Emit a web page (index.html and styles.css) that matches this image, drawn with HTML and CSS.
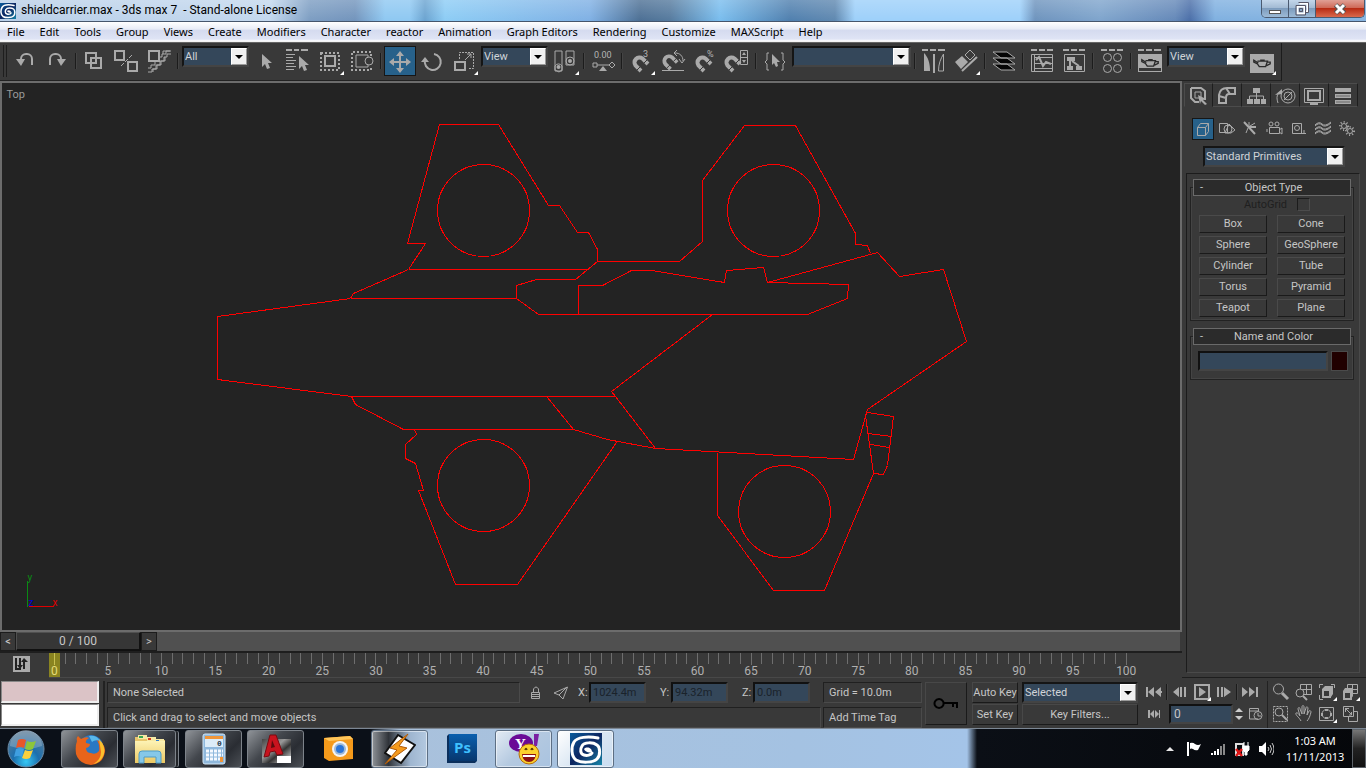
FILE: index.html
```
<!DOCTYPE html>
<html lang="en">
<head>
    <meta charset="UTF-8" />
    <meta name="viewport" content="width=device-width, initial-scale=1.0" />
    <title>shieldcarrier.max - 3ds max 7 - Stand-alone License</title>
    <link rel="stylesheet" href="styles.css">
</head>
<body>
    <svg class="defs" width="0" height="0" aria-hidden="true">
        <defs>
            <linearGradient id="max-bg" x1="0" y1="0" x2="1" y2="1"><stop offset="0" stop-color="#0a5c9c"/><stop offset=".5" stop-color="#0d2560"/><stop offset="1" stop-color="#1685a8"/></linearGradient>
            <radialGradient id="orb" cx=".5" cy=".85" r=".8"><stop offset="0" stop-color="#36c8f5"/><stop offset=".45" stop-color="#1b6fae"/><stop offset="1" stop-color="#5a7c98"/></radialGradient>
            <linearGradient id="folder" x1="0" y1="0" x2="0" y2="1"><stop offset="0" stop-color="#fdf3b5"/><stop offset="1" stop-color="#ecc862"/></linearGradient>
            <linearGradient id="ps" x1="0" y1="0" x2="0" y2="1"><stop offset="0" stop-color="#0a5fae"/><stop offset="1" stop-color="#07376e"/></linearGradient>
            <linearGradient id="smoke" x1="0" y1="0" x2="1" y2="1"><stop offset="0" stop-color="#444"/><stop offset=".4" stop-color="#999"/><stop offset=".6" stop-color="#333"/><stop offset="1" stop-color="#eee"/></linearGradient>
            <symbol id="max-logo" viewBox="0 0 32 32">
                <rect width="32" height="32" fill="url(#max-bg)"/>
                <path d="M28 5C18 3 7 4 4 9c-3 5-3 14 2 18 5 3 17 3 21-1 4-4 3-12 0-14-4-3-13-3-15 1-2 3-2 8 2 9 3 1 7 0 8-2" fill="none" stroke="#fff" stroke-width="3" stroke-linecap="round"/>
                <path d="M14 16c3-3 8-1 8 3-3 1-7 0-8-3z" fill="#fff"/>
            </symbol>
            <symbol id="magnet" viewBox="0 0 20 20">
                <path d="M10 17 4.500 11.500A5 5 0 0 1 11.500 4.500L17 10" fill="none" stroke="#aaa" stroke-width="4"/>
                <path d="m6 16 4-4M13 9l4-4" stroke="#393939" stroke-width="1"/>
            </symbol>
            <symbol id="teapot" viewBox="0 0 22 12">
                <path d="M6 4h11l-2 6H8L6 7 2 5V3l5 3M9 3h5M17 5h3v2l-4 2" fill="#aaa" stroke="#2a2a2a" stroke-width="1.500"/>
            </symbol>
        </defs>
    </svg>

    <header class="titlebar">
        <svg class="app-icon" viewBox="0 0 32 32"><use href="#max-logo"/></svg>
        <h1 class="title">shieldcarrier.max - 3ds max 7 &nbsp;- Stand-alone License</h1>
        <div class="window-buttons">
            <button class="win" aria-label="Minimize"><svg width="14" height="14"><rect x="1.500" y="8.500" width="11" height="3" fill="#fff" stroke="#555"/></svg></button>
            <button class="win" aria-label="Restore"><svg width="14" height="14" fill="none"><path d="M4.500 1.500h8v8h-3" stroke="#fff" stroke-width="2"/><rect x="2.500" y="4.500" width="7" height="7" stroke="#fff" stroke-width="2"/><path d="M3.500 .5h10v10h-3M1 3.500h9.500v9.500H1z M4.500 6.500h3v3h-3z" stroke="#556"/></svg></button>
            <button class="win win-close" aria-label="Close"><svg width="14" height="14"><path d="m2.500 3 9 8m0-8-9 8" stroke="#555" stroke-width="5"/><path d="m3 3 8 8m0-8-8 8" stroke="#fff" stroke-width="3"/></svg></button>
        </div>
    </header>

    <nav class="menubar">
        <button>File</button>
        <button>Edit</button>
        <button>Tools</button>
        <button>Group</button>
        <button>Views</button>
        <button>Create</button>
        <button>Modifiers</button>
        <button>Character</button>
        <button>reactor</button>
        <button>Animation</button>
        <button>Graph Editors</button>
        <button>Rendering</button>
        <button>Customize</button>
        <button>MAXScript</button>
        <button>Help</button>
    </nav>

    <!-- main toolbar -->
    <div class="toolbar-row">
    <div class="toolbar">
        <span class="grip"></span>
        <button class="tool" aria-label="Undo"><svg viewBox="0 0 32 32"><path d="M12 16v-2a5 5 0 0 1 5-5h1a5 5 0 0 1 5 5v6" class="l2"/><path d="M7 14h9l-4 7z" class="f"/></svg></button>
        <button class="tool" aria-label="Redo"><svg viewBox="0 0 32 32"><path d="M20 16v-2a5 5 0 0 0-5-5h-1a5 5 0 0 0-5 5v6" class="l2"/><path d="M25 14h-9l4 7z" class="f"/></svg></button>
        <span class="sep"></span>
        <button class="tool" aria-label="Select and Link"><svg viewBox="0 0 32 32"><path d="M7 8h10v10H7zM12 13h10v10H12z" class="l2"/></svg></button>
        <button class="tool" aria-label="Unlink Selection"><svg viewBox="0 0 32 32"><path d="M4 6h9v9H4zM17 17h9v9h-9z" class="l2"/><path d="m10 21 3-3m1-1 3-3m1-1 3-3" class="l"/></svg></button>
        <button class="tool" aria-label="Bind to Space Warp"><svg viewBox="0 0 32 32"><path d="M6 6h10v10H6z" class="l2"/><path d="M27 6h-4v3h-4v3h-3v4h-4v4H8v3H5M28 9h-4v3h-3v4h-4v4h-4v4H9v3H5M28 6h-4M20 9v-3h4M10 27v-3h4v-4h4v-4h4v-4" class="l"/></svg></button>
        <span class="sep"></span>
        <span class="combo combo-s"><select aria-label="Selection Filter"><option>All</option></select></span>
        <button class="tool" aria-label="Select Object"><svg viewBox="0 0 32 32"><path d="M12 9v13l3-3 2 5 3-1-2-5h4z" class="f"/></svg></button>
        <button class="tool" aria-label="Select by Name"><svg viewBox="0 0 32 32"><path d="M4 5h6m2 0h5m2 0h7" class="l2"/><path d="M4 9.500h9M4 12.500h7M4 15.500h10M4 18.500h8M4 21.500h10M4 24.500h8" class="l"/><path d="M17 11v13l3-3 2 5 3-1-2-5h4z" class="f"/></svg></button>
        <button class="tool" aria-label="Rectangular Selection Region"><svg viewBox="0 0 32 32"><path d="M7 8h18v17H7z" class="l2 dots"/><path d="M11 11h10v10H11z" class="l2"/><path d="M30 26v4h-4z" fill="#fff"/></svg></button>
        <button class="tool" aria-label="Window/Crossing"><svg viewBox="0 0 32 32"><path d="M25 11V7H6v18h19v-4" class="l2 dots"/><path d="M22 12v-2H10v12h12v-2" class="l"/><circle cx="23" cy="16" r="4" class="l"/></svg></button>
        <span class="sep"></span>
        <button class="tool tool-on" aria-label="Select and Move"><svg viewBox="0 0 32 32"><path d="M16 8v18M7 17h18" class="l2"/><path d="m12 11 4-5 4 5zM12 23l4 5 4-5zM10 13l-5 4 5 4zM22 13l5 4-5 4z" class="f"/></svg></button>
        <button class="tool" aria-label="Select and Rotate"><svg viewBox="0 0 32 32"><path d="M18 9a8 8 0 1 1-9 6" class="l2"/><path d="m5 17 4-5 4 5z" class="f"/></svg></button>
        <button class="tool" aria-label="Select and Scale"><svg viewBox="0 0 32 32"><path d="M7 17h10v8H7z" class="l2"/><path d="M11.500 14V7.500h14v16H20" class="l dash"/><path d="m17 15 6-6m-4 0h4v4" class="l"/><path d="M30 26v4h-4z" fill="#fff"/></svg></button>
        <span class="combo combo-s"><select aria-label="Reference Coordinate System"><option>View</option></select></span>
        <button class="tool" aria-label="Use Pivot Point Center"><svg viewBox="0 0 32 32"><path d="M6 6h7v20H6zM17 6h8v14h-8z" class="l"/><path d="M6 21a4 4 0 0 1 7 0v4l-3 2-4-2z" class="l"/><circle cx="9.500" cy="22" r="2" class="f"/><circle cx="21" cy="16" r="2" class="f"/><circle cx="21" cy="16" r="4" class="l"/><path d="M30 26v4h-4z" fill="#fff"/></svg></button>
        <span class="sep"></span>
        <button class="tool" aria-label="Select and Manipulate"><svg viewBox="0 0 32 32"><text x="7" y="13" class="icon-text">0.00</text><path d="M6 18h4v4H6zM10 20h12M22 20l3-3 3 3-3 3z" class="l"/><path d="M12 26l4-5 4 5z" class="f"/></svg></button>
        <span class="sep"></span>
        <button class="tool" aria-label="Snaps Toggle"><svg viewBox="0 0 32 32"><use href="#magnet" x="6" y="9" width="20" height="20"/><text x="18" y="12" class="icon-text">3</text><path d="M30 26v4h-4z" fill="#fff"/></svg></button>
        <button class="tool" aria-label="Angle Snap Toggle"><svg viewBox="0 0 32 32"><use href="#magnet" x="4" y="8" width="19" height="19"/><path d="M5 25.500h22M18 8c5 0 8 3 8 8M20 5l-3 3 3 3M22 14l3 4 3-4" class="l"/></svg></button>
        <button class="tool" aria-label="Percent Snap Toggle"><svg viewBox="0 0 32 32"><use href="#magnet" x="5" y="9" width="20" height="20"/><text x="18" y="12" class="icon-text">%</text></svg></button>
        <button class="tool" aria-label="Spinner Snap Toggle"><svg viewBox="0 0 32 32"><use href="#magnet" x="2" y="9" width="20" height="20"/><path d="M19.500 5.500h7v14h-7zM19 12.500h7" class="l"/><path d="m21 10 2-3 2 3zM21 15l2 3 2-3z" class="f"/></svg></button>
        <span class="sep"></span>
        <button class="tool" aria-label="Named Selection Sets"><svg viewBox="0 0 32 32"><path d="M10 8H8v7l-2 2 2 2v6h2M22 8h2v7l2 2-2 2v6h-2" class="l"/><path d="M13 9v11l2-2 2 4 2-1-1-4h3z" class="f"/></svg></button>
        <span class="combo combo-m"><select aria-label="Named Selection"><option></option></select></span>
        <span class="sep"></span>
        <button class="tool" aria-label="Mirror"><svg viewBox="0 0 32 32"><path d="M4 5h6m2 0h6m2 0h7" class="l2"/><path d="M6 8v18h6c0-8-2-14-6-18z" class="f"/><path d="M16 9v19" class="l2"/><path d="M25.500 9v17h-5c0-7 2-12 5-17z" class="l"/></svg></button>
        <button class="tool" aria-label="Align"><svg viewBox="0 0 32 32"><path d="m5 17 7-6 6 6-7 7z" class="f"/><path d="m15 10 5-5 5 5-5 5zM12 26 26 12" class="l"/><path d="m12 26 15-14" class="l2"/><path d="M30 26v4h-4z" fill="#fff"/></svg></button>
        <span class="sep"></span>
        <button class="tool" aria-label="Layer Manager"><svg viewBox="0 0 32 32"><path d="M5 19h14l8 6H13zM5 13h14l8 6H13zM5 7h14l8 6H13z" fill="#050505" stroke="#aaa"/></svg></button>
        <span class="sep"></span>
        <button class="tool" aria-label="Curve Editor"><svg viewBox="0 0 32 32"><path d="M5 5h6m2 0h6m2 0h6" class="l2"/><path d="M5.500 9.500h21v17h-21zM8.500 9v17M8 12.500h19M8 18.500h19M8 23.500h19" class="l"/><path d="m10 15 3-3 4 9 3-4 5 2" class="l2"/></svg></button>
        <button class="tool" aria-label="Schematic View"><svg viewBox="0 0 32 32"><path d="M5 5h6m2 0h6m2 0h6" class="l2"/><path d="M6.500 9.500h20v17h-20z" class="l"/><path d="M9 12h8v4H9zM9 21h6v4H9zM18 21h6v4h-6z" class="f"/><path d="M12 16v5M14 16l7 5" class="l2"/></svg></button>
        <span class="sep"></span>
        <button class="tool" aria-label="Material Editor"><svg viewBox="0 0 32 32"><path d="M5 5h6m2 0h6m2 0h6" class="l2"/><g class="l"><circle cx="11.500" cy="12.500" r="4"/><circle cx="21.500" cy="12.500" r="4"/><circle cx="11.500" cy="23.500" r="4"/><circle cx="21.500" cy="23.500" r="4"/></g></svg></button>
        <span class="sep"></span>
        <button class="tool" aria-label="Render Scene"><svg viewBox="0 0 32 32"><path d="M4 5h6m2 0h6m2 0h7" class="l2"/><path d="M4 9h24v18H4z" class="f"/><path d="M5 23h22v3H5z" fill="#393939"/><use href="#teapot" x="6" y="12" width="20" height="11"/></svg></button>
        <span class="combo combo-v"><select aria-label="Render Type"><option>View</option></select></span>
        <button class="tool" aria-label="Quick Render"><svg viewBox="0 0 32 32"><path d="M4 9h24v19H4z" class="f"/><use href="#teapot" x="6" y="12" width="20" height="12"/><path d="M30 26v4h-4z" fill="#fff"/></svg></button>
    </div>
    </div>

    <main class="workspace">
        <section class="stage">
            <div class="viewport">
                <svg class="drawing" viewBox="1.500 82.500 1178 547" preserveAspectRatio="xMinYMin meet">
                    <text x="6" y="97" class="view-name">Top</text>
                    <g class="wire">
                        <!-- hull -->
                        <path d="M350 298 217 316V379L351 396H615L611 391 712 314M615 396 655 448"/>
                        <path d="M767 282 877 252 899 276 943 269 966 341 867 409 853 459 655 448 607 439 573 429 547 397"/>
                        <path d="M351 396 355 404 403 429H573"/>
                        <path d="M350 298H516M408 269H588"/>
                        <!-- cockpit -->
                        <path d="M597 261 575 279H536L516 285V298L538 314H807L847 298 848 284 767 282 763 267 726 270 724 282 651 270H631L602 285H578V314"/>
                        <!-- nacelles -->
                        <path d="M597 261V249L588 232H577L559 205H548L498 124H439L407 243H425L408 269 353 293 350 298"/>
                        <path d="M597 261H679L702 241V180L744 125H795L855 233V244L867 245 870 253"/>
                        <path d="M414 429 416 434 405 444V458L415 463 423 490H418L455 584H517L616 442"/>
                        <path d="M717 452V515L773 590H824L873 473"/>
                        <path d="M867 409 865 415 873 473 883 474 887 465 893 416 867 412M868 433 891 436M870 444 889 447"/>
                        <circle cx="483" cy="210" r="46"/>
                        <circle cx="773" cy="210" r="46"/>
                        <circle cx="483" cy="485" r="46"/>
                        <circle cx="784" cy="511" r="46"/>
                    </g>
                    <g class="axis">
                        <path d="M27 606V580" stroke="#0a8a14"/>
                        <path d="M28 606H53" stroke="#e00000"/>
                        <text x="27" y="580" fill="#0a8a14">y</text>
                        <text x="52" y="605" fill="#e00000">x</text>
                        <text x="28" y="605" fill="#0000d8">z</text>
                    </g>
                </svg>
            </div>
            <div class="slider-row">
                <button class="step" aria-label="Previous frame">&lt;</button>
                <button class="handle">0 / 100</button>
                <button class="step" aria-label="Next frame">&gt;</button>
            </div>
            <div class="trackbar">
                <button class="mini-curve" aria-label="Open Mini Curve Editor"><svg width="17" height="16"><rect width="17" height="16" fill="#aaa"/><path d="M2 2h2v10h4v2H2z" fill="#222"/><path d="M7 2v9M11 5v8" stroke="#222" stroke-width="2"/><path d="m4 9 3 4 3-4zM8 6l3-4 4 4z" fill="#222"/></svg></button>
                <div class="ruler" id="ruler"></div>
            </div>
        </section>

        <aside class="panel">
            <div class="tabs">
                <button class="tab tab-on" aria-label="Create"><svg viewBox="0 0 28 24"><path d="M6 4h10l4 3v9M6 4v10l4 4h4M6 14V4" class="l2"/><path d="M10 8h6v6h-6z" class="l"/><path d="m13 11 8 4-3 1 4 4-2 1-4-4-1 3z" class="f"/></svg></button>
                <button class="tab" aria-label="Modify"><svg viewBox="0 0 28 24"><path d="M6 19V11q1-7 8-7h8v6h-6q-3 0-3 4v5zM6 12l7 2M13 4l4 6" class="l2"/></svg></button>
                <button class="tab" aria-label="Hierarchy"><svg viewBox="0 0 28 24"><path d="M11 4h7v5h-7zM5 15h6v5H5zM12 15h6v5h-6zM19 15h5v5h-5z" class="f"/><path d="M14.500 9v6M7.500 15v-3h14v3" class="l"/></svg></button>
                <button class="tab" aria-label="Motion"><svg viewBox="0 0 28 24"><circle cx="17" cy="12" r="7" class="l"/><circle cx="17" cy="12" r="4" class="l"/><path d="m13 16 8-8" class="l"/><path d="M7 19c-2-6-1-9 3-12" class="l"/><path d="m4 11 7-6v5z" class="f"/></svg></button>
                <button class="tab" aria-label="Display"><svg viewBox="0 0 28 24"><path d="M4.500 4.500h19v14h-19z" class="l"/><path d="M8 7h12v9H8z" class="l2"/><path d="M10 20h8" class="l2"/></svg></button>
                <button class="tab" aria-label="Utilities"><svg viewBox="0 0 28 24"><path d="M6 4h16v4H6zM6 10h16v4H6zM6 16h16v4H6z" class="f"/><path d="M7 12h14M7 18h14" stroke="#666"/></svg></button>
            </div>
            <div class="cats">
                <button class="cat cat-on" aria-label="Geometry"><svg viewBox="0 0 22 22"><path d="M5.500 9.500h8v8h-8zM5.500 9.500l3-4h8v8l-3 4M13.500 9.500l3-4" class="l"/></svg></button>
                <button class="cat" aria-label="Shapes"><svg viewBox="0 0 22 22"><path d="M3.500 5.500h8v9h-8zM9 15l4-9 6 6-4 3z" class="l"/><circle cx="12" cy="11" r="4" class="l"/></svg></button>
                <button class="cat" aria-label="Lights"><svg viewBox="0 0 22 22"><path d="m4 4 11 12M9 9h7" class="l2"/><path d="M9 9V4M10 8l5-3M8 10l-2 5" class="l"/></svg></button>
                <button class="cat" aria-label="Cameras"><svg viewBox="0 0 22 22"><circle cx="7" cy="6" r="2" class="l"/><circle cx="13" cy="6" r="2" class="l"/><path d="M5.500 9.500h10v6h-10zM15 12l3-2v6l-3-2M3 11v3" class="l"/></svg></button>
                <button class="cat" aria-label="Helpers"><svg viewBox="0 0 22 22"><path d="M4.500 5.500h9v10h-9zM13 15.500h5M16 12v4" class="l"/><circle cx="9" cy="10" r="2.500" class="l"/></svg></button>
                <button class="cat" aria-label="Space Warps"><svg viewBox="0 0 22 22"><path d="M3 7q4-4 7-1t9-2M3 11q4-4 7-1t9-2M3 15q4-4 7-1t9-2" class="l"/><path d="M3 8q4-4 7-1t9-2M3 12q4-4 7-1t9-2M3 16q4-4 7-1t9-2" class="l"/></svg></button>
                <button class="cat" aria-label="Systems"><svg viewBox="0 0 22 22"><circle cx="8" cy="8" r="2.500" class="l"/><circle cx="14" cy="13" r="2.500" class="l"/><circle cx="8" cy="8" r="4" class="l dots1"/><circle cx="14" cy="13" r="4" class="l dots1"/></svg></button>
            </div>
            <span class="combo combo-p"><select aria-label="Subcategory"><option>Standard Primitives</option></select></span>
            <div class="rollouts">
                <section class="rollout">
                    <button class="rollout-head"><span>-</span><b>Object Type</b></button>
                    <div class="autogrid"><label for="autogrid">AutoGrid</label><input type="checkbox" id="autogrid" disabled></div>
                    <div class="types">
                        <button>Box</button><button>Cone</button>
                        <button>Sphere</button><button>GeoSphere</button>
                        <button>Cylinder</button><button>Tube</button>
                        <button>Torus</button><button>Pyramid</button>
                        <button>Teapot</button><button>Plane</button>
                    </div>
                </section>
                <section class="rollout">
                    <button class="rollout-head"><span>-</span><b>Name and Color</b></button>
                    <div class="name-row">
                        <input type="text" aria-label="Object name">
                        <button class="swatch" aria-label="Object color"></button>
                    </div>
                </section>
            </div>
        </aside>
    </main>

    <footer class="status">
        <div class="listener">
            <input type="text" class="macro" aria-label="Macro recorder">
            <input type="text" aria-label="MAXScript listener">
        </div>
        <div class="prompt">
            <div class="prompt-row">
                <div class="field selected">None Selected</div>
                <button class="plain" aria-label="Selection Lock"><svg width="12" height="14"><path d="M3.500 6V3q2.500-4 5 0v3" class="l"/><path d="M1.500 6.500h8v6h-8zM2 8.500h8M2 10.500h8" class="l"/></svg></button>
                <button class="plain" aria-label="Offset Mode"><svg width="16" height="14"><path d="M14.500 1 1 7l5 2 4 4zM6 9l8-8" class="l"/></svg></button>
                <label for="cx">X:</label><input id="cx" type="text" value="1024.4m">
                <label for="cy">Y:</label><input id="cy" type="text" value="94.32m">
                <label for="cz">Z:</label><input id="cz" type="text" value="0.0m">
            </div>
            <div class="field">Click and drag to select and move objects</div>
        </div>
        <div class="gridinfo">
            <div class="field">Grid = 10.0m</div>
            <div class="field">Add Time Tag</div>
        </div>
        <button class="key" aria-label="Set Keys"><svg width="26" height="14"><path d="M6 2a4.500 4.500 0 1 0 .1 0zM11 6h13v5M20 6v4" fill="none" stroke="#000" stroke-width="2"/></svg></button>
        <div class="keys">
            <button>Auto Key</button>
            <button>Set Key</button>
        </div>
        <div class="filters">
            <span class="combo"><select aria-label="Key set"><option>Selected</option></select></span>
            <button>Key Filters...</button>
        </div>
        <div class="playback">
            <div class="play-row">
                <button class="plain" aria-label="Go to Start"><svg width="18" height="12"><path d="M1 1h2v10H1zM9 1v10L3 6zM16 1v10l-6-5zM16 5h1v2h-1z" class="f"/></svg></button>
                <span class="sep"></span>
                <button class="plain" aria-label="Previous Frame"><svg width="18" height="12"><path d="M8 1v10L2 6zM9 1h2v10H9zM13 1h2v10h-2z" class="f"/></svg></button>
                <button class="plain" aria-label="Play Animation"><svg width="18" height="18"><path d="M2 2h14v14H2z" class="l2"/><path d="M6 4v10l7-5z" class="f"/><path d="M18 14v4h-4z" fill="#fff"/></svg></button>
                <button class="plain" aria-label="Next Frame"><svg width="18" height="12"><path d="M2 1h2v10H2zM6 1h2v10H6zM9 1v10l7-5z" class="f"/></svg></button>
                <span class="sep"></span>
                <button class="plain" aria-label="Go to End"><svg width="18" height="12"><path d="M1 1v10l6-5zM8 1v10l6-5zM15 1h2v10h-2z" class="f"/></svg></button>
            </div>
            <div class="play-row">
                <button class="plain" aria-label="Key Mode Toggle"><svg width="18" height="10"><path d="M3 1h2v8H3zM9 1v8L5 5zM10 1v8l4-4zM14 1h1v8h-1z" class="f"/></svg></button>
                <input type="text" value="0" class="frame" aria-label="Current frame">
                <button class="plain spin" aria-label="Spinner"><svg width="8" height="16"><path d="m0 6 4-4 4 4zM0 10l4 4 4-4z" fill="#ccc"/></svg></button>
                <button class="plain" aria-label="Time Configuration"><svg width="16" height="14"><path d="M10 12H1.500V1.500h9V4M2 4h9" class="l"/><circle cx="10" cy="8.500" r="4" class="l"/><path d="M10 6v3h3" class="l"/></svg></button>
            </div>
        </div>
        <div class="nav">
            <button class="plain" aria-label="Zoom"><svg viewBox="0 0 20 20"><circle cx="7.500" cy="7" r="5" class="l"/><path d="m11 11 6 6" class="l3"/></svg></button>
            <button class="plain" aria-label="Zoom All"><svg viewBox="0 0 20 20"><path d="M6.500 2.500h11v10h-11zM12.500 2v10M6 7.500h12" class="l"/><circle cx="6" cy="11" r="4" fill="#393939" stroke="#aaa"/><path d="m9 14 4 4" class="l2"/></svg></button>
            <button class="plain" aria-label="Zoom Extents"><svg viewBox="0 0 20 20"><path d="M2.500 6V2.500H6M14 2.500h3.500V6M2.500 13v4.500H6" class="l"/><path d="M6 8h7v7H6z" class="l2"/><path d="m5 7 3-3h8v8l-2 3V7z" class="f"/><path d="M20 15v4h-4z" fill="#fff"/></svg></button>
            <button class="plain" aria-label="Zoom Extents All"><svg viewBox="0 0 20 20"><path d="M7.500 2.500h10v9h-10zM12.500 2v10M7 7.500h11" class="l"/><path d="M4 10h7v7H4z" fill="#393939" stroke="#aaa" stroke-width="2"/><path d="m3 9 2-3h8v8l-2 3V9z" class="f"/><path d="M20 15v4h-4z" fill="#fff"/></svg></button>
            <button class="plain" aria-label="Region Zoom"><svg viewBox="0 0 20 20"><path d="M2.500 2.500h14v15h-14z" class="l dash"/><circle cx="8" cy="8" r="4" class="l"/><path d="m11 11 5 5" class="l2"/></svg></button>
            <button class="plain" aria-label="Pan"><svg viewBox="0 0 20 20"><path d="M7 17c-2-4-6-6-5-8 2-1 3 2 4 3L4 5c0-2 2-2 2 0l2 5V3c0-2 2-2 2 0v7l2-6c0-2 2-1 2 0l-1 7 2-4c1-1 2 0 2 1-1 4-2 7-4 9" class="l"/></svg></button>
            <button class="plain" aria-label="Arc Rotate"><svg viewBox="0 0 20 20"><path d="M2.500 3.500h14v13h-14z" class="l"/><circle cx="9.500" cy="10" r="4.500" class="l"/><path d="M8 5h3v2H8zM8 15h3v-2H8zM4 9v3h2V9zM15 9v3h-2V9z" class="f"/><path d="M20 15v4h-4z" fill="#fff"/></svg></button>
            <button class="plain" aria-label="Min/Max Toggle"><svg viewBox="0 0 20 20"><path d="M3.500 2.500h10v10h-10z" class="l"/><path d="M14 7.500h3.500v10h-9V13" class="l"/><path d="m5 4 7 7M5.500 8V4.500H9M11.500 8v3H9" class="l"/></svg></button>
        </div>
    </footer>

    <div class="taskbar">
        <button class="start" aria-label="Start"><svg viewBox="0 0 38 38"><circle cx="19" cy="19" r="18" fill="url(#orb)" stroke="#6c8ba6"/><path d="M3 16a16 16 0 0 1 32 0q-16 6-32 0z" fill="#fff" opacity=".22"/><path d="M11 10q4-2 8 0l-2 8q-4-2-8 0z" fill="#e8562a"/><path d="M20 11q4 2 9 0l-3 8q-4 2-8 0z" fill="#8cc63c"/><path d="M9 19q4-2 8 0l-2 8q-4-2-8 0z" fill="#3f9fe0"/><path d="M18 20q4 2 8 0l-3 8q-4 2-8 0z" fill="#fbd03b"/></svg></button>
        <button class="task" aria-label="Firefox"><svg viewBox="0 0 32 32"><circle cx="17" cy="14" r="12" fill="#2a78c4"/><path d="M15 3q8-1 11 5-5-2-8 1z" fill="#59b8ea"/><path d="M3 8q-1-3 1-5l3 3q5-3 8-1-4 2-3 5l4 1q0 3-4 4 0 5 5 5 5 2 8-2 1-6-2-11 9 4 8 12-2 12-14 13Q5 31 2 21 1 13 3 8z" fill="#e8641b"/><path d="M25 6q7 7 5 15-3 9-11 10 8-4 8-12z" fill="#f9c02e"/></svg></button>
        <button class="task task-stack" aria-label="Windows Explorer"><svg viewBox="0 0 32 32"><path d="M1 4h12l2 3h16v20H1z" fill="#e8c66b"/><path d="M4 2h9v4H4z" fill="#f7e9a4"/><path d="M5 3h4v2H5z" fill="#35a853"/><path d="M13 4h9v4h-9z" fill="#f7e9a4"/><path d="M14 5h3v2h-3z" fill="#d63c22"/><path d="M21 6h9v4h-9z" fill="#f7e9a4"/><path d="M22 7h3v2h-3z" fill="#2d7bd0"/><path d="M1 8h30v22H1z" fill="url(#folder)"/><path d="M5 30V21q0-3 3-3h16q3 0 3 3v9h-5v-6H10v6z" fill="#86c8e8" stroke="#4f9cc6"/></svg></button>
        <button class="task" aria-label="Calculator"><svg viewBox="0 0 32 32"><rect x="5" y="1" width="22" height="30" rx="2" fill="#8fb8dc" stroke="#d4e8f8"/><path d="M7 3h18v3H7z" fill="#f0963a"/><path d="M7 6h18v8H7z" fill="#dcecf8"/><text x="19" y="13" class="calc-digit">0</text><path d="M8 18h17M8 22h17M8 26h17" stroke="#f4f9ff" stroke-width="3" stroke-dasharray="3 1"/><path d="M22 24h3v5h-3z" fill="#f0963a"/></svg></button>
        <button class="task" aria-label="AutoCAD"><svg viewBox="0 0 32 32"><path d="M2 6h29v24H2z" fill="url(#smoke)"/><path d="M17 23h14v7H17z" fill="#fff"/><path d="m4 24 6-22h6l7 19-6 1-2-4-5 1-1 4z" fill="#c9131e" stroke="#7c0a10"/><path d="m12 7 3 7-4 1z" fill="#5d0b0e"/></svg></button>
        <button class="task task-flat" aria-label="Camera"><svg viewBox="0 0 32 32"><path d="M2 5 28 3l3 3v20L7 28l-5-3z" fill="#f59a1b"/><path d="M2 5 28 3l3 3-24 2z" fill="#ffc65a"/><circle cx="18" cy="16" r="8" fill="#f4f4f4"/><circle cx="18" cy="16" r="6" fill="#9fb9d8"/><circle cx="18" cy="16" r="4" fill="#2a74d8"/></svg></button>
        <button class="task task-light task-edge" aria-label="Winamp"><svg viewBox="0 0 32 32"><path d="M14 2 31 12 17 30 1 20z" fill="#fff" stroke="#111" stroke-width="2"/><path d="M24 1 6 15l7 2L1 31l22-16-8-2z" fill="#f59a1b" stroke="#b05a08"/></svg></button>
        <button class="task task-flat" aria-label="Photoshop"><svg viewBox="0 0 32 32"><path d="M1 3 3 1h28v27l-2 2H1z" fill="#0b2f5c"/><path d="M3 1h28v27H3z" fill="url(#ps)"/><text x="8" y="20" class="ps-text">Ps</text></svg></button>
        <button class="task task-light" aria-label="Yahoo Messenger"><svg viewBox="0 0 32 32"><ellipse cx="13" cy="10" rx="12" ry="9" fill="#6a0a96"/><path d="M26 1h5l-2 12h-3z" fill="#7b1fa2"/><text x="7" y="16" class="yahoo-y">Y</text><circle cx="21" cy="21" r="10" fill="#fbd12c" stroke="#b86c0a"/><path d="M14 21h14q-1 8-7 8t-7-8z" fill="#8c1212"/><path d="M15 22h12v2H15z" fill="#fff"/><path d="M17 17q1-3 2 0M23 17q1-3 2 0" fill="none" stroke="#5b3a00" stroke-width="1.500"/></svg></button>
        <button class="task task-light task-on" aria-label="3ds max"><svg viewBox="0 0 32 32"><use href="#max-logo"/></svg></button>

        <div class="tray">
            <button class="plain" aria-label="Show hidden icons"><svg width="8" height="6"><path d="m0 5 4-4 4 4z" fill="#e8e8e8"/></svg></button>
            <button class="plain" aria-label="Action Center"><svg width="16" height="16"><path d="M2 1v14" stroke="#fff" stroke-width="2"/><path d="M4 2q3-1 5 1 3 2 6 0l-3 6q-3 1-5-1-2-1-3 0z" fill="#fff"/></svg></button>
            <button class="plain" aria-label="Network"><svg width="16" height="16"><path d="M1 12h2v2H1zM4 10h2v4H4zM7 8h2v6H7z" fill="#fff"/><path d="M10 5h2v9h-2zM13 3h2v11h-2z" fill="#888"/></svg></button>
            <button class="plain" aria-label="Power"><svg width="16" height="16"><path d="M2 3h7v11H2z" fill="none" stroke="#ddd" stroke-width="2"/><path d="M9 5h6v4l-2 2v3h-2v-3L9 9zM10 1v4M14 1v4" fill="#fff" stroke="#fff"/><path d="m2 8 6 7m0-7-6 7" stroke="#e01515" stroke-width="2.500"/></svg></button>
            <button class="plain" aria-label="Volume"><svg width="16" height="16"><path d="M1 5h3l4-4v14l-4-4H1z" fill="#fff"/><path d="M10 6q2 2 0 4M12 4q3 4 0 8M14 2q4 6 0 12" fill="none" stroke="#ccc"/></svg></button>
            <div class="clock"><time>1:03 AM</time><time>11/11/2013</time></div>
            <button class="show-desktop" aria-label="Show desktop"></button>
        </div>
    </div>

    <script src="script.js"></script>
</body>
</html>
```
FILE: styles.css
```
*, ::before, ::after { box-sizing: border-box; }
body { margin: 0; min-height: 100vh; display: flex; flex-direction: column; background: #393939; color: #c6c6c6; font: 11px/14px Roboto, "Liberation Sans", Arial, sans-serif; }
button, input, select { margin: 0; padding: 0; border: 0; border-radius: 0; background: none; color: inherit; font: inherit; }
svg { display: block; }
.defs { position: absolute; }

/* icon strokes */
.l { fill: none; stroke: #aaa; stroke-width: 1; }
.l2 { fill: none; stroke: #aaa; stroke-width: 2; }
.l3 { fill: none; stroke: #aaa; stroke-width: 3; }
.f { fill: #aaa; }
.dots { stroke-dasharray: 2 2; }
.dots1 { stroke-dasharray: 1 2; stroke-width: 2; }
.dash { stroke-dasharray: 2 1; }
.icon-text { font-size: 9px; fill: #b4b4b4; }
.plain { display: flex; align-items: center; justify-content: center; }

/* title bar */
.titlebar { display: flex; height: 22px; flex: none; border-bottom: 1px solid #46566c; background: linear-gradient(to bottom, rgba(255,255,255,.2), rgba(255,255,255,0)), linear-gradient(to right, #b9cfe8 0, #c3d8ee 270px, #7c9dc2 310px, #7294bc 355px, #8ec8f2 385px, #8ec8f2 410px, #6aa3d0 425px, #8cccf5 445px, #7fb0e4 590px, #4c6f94 640px, #557a9e 670px, #79bdee 720px, #4f7fae 790px, #5f88b0 835px, #9dd0fa 855px, #9dd0fa 1020px, #6d93bd 1035px, #7ea4cc 1100px, #6488b8 1175px, #4a6ea8 1190px, #7fb0e0 1215px, #86b4e0 100%); }
.app-icon { width: 16px; height: 16px; margin: 3px 5px 0 0; }
.title { flex: 1; margin: 0; color: #000; font: 400 12px/21px Roboto, "Open Sans", sans-serif; }
.window-buttons { display: flex; height: 18px; margin-right: 1px; border: 1px solid #4a5a70; border-top: 0; border-radius: 0 0 5px 5px; overflow: hidden; }
.win { display: flex; align-items: center; justify-content: center; width: 27px; border-right: 1px solid #4a5a70; background: linear-gradient(#c3d6ea, #a3bbd4 45%, #7d9cbd 50%, #9dbad6); }
.win-close { width: 48px; border-right: 0; background: linear-gradient(#e0a095, #cf6a58 45%, #b82c14 50%, #d9694c); }

/* menu bar */
.menubar { display: flex; gap: 1px; height: 20px; flex: none; background: linear-gradient(#fff, #e9edf7 35%, #d5dbef 45%, #dfe4f5 90%, #fff); border-bottom: 1px solid #f4f4f4; }
.menubar button { padding: 0 7px; color: #000; font: 11px/18px "Noto Sans", "Open Sans", sans-serif; }

/* toolbar */
.toolbar-row { height: 39px; flex: none; border-top: 1px solid #666; }
.toolbar { display: flex; align-items: center; width: 1282px; height: 38px; padding-bottom: 2px; border-right: 1px solid #1c1c1c; border-bottom: 1px solid #222; }
.grip { width: 4px; height: 32px; margin: 0 2px 0 3px; border: 1px solid #1e1e1e; border-width: 0 1px; }
.tool { flex: none; width: 32px; height: 32px; }
.tool svg { width: 32px; height: 32px; }
.tool-on { height: 30px; border: 1px solid #161616; background: #27618a; overflow: hidden; }
.tool-on svg { margin: -2px -1px; }
.sep { flex: none; width: 2px; height: 16px; margin: 0 2px; border-left: 1px solid #1c1c1c; border-right: 1px solid #444; }

/* drop-downs */
.combo { position: relative; flex: none; display: block; height: 21px; border: 2px solid #151515; border-right-color: #444; border-bottom-color: #444; background: #34475a; }
.combo select { display: block; width: 100%; height: 100%; padding: 0 18px 0 1px; appearance: none; color: #d0d4d8; }
.combo::before { content: ""; position: absolute; top: 0; right: 0; width: 16px; height: 100%; border: 1px solid #fff; border-right-color: #999; border-bottom-color: #999; background: #f0f0f0; pointer-events: none; }
.combo::after { content: ""; position: absolute; top: 7px; right: 4px; border: 4px solid transparent; border-top-color: #000; border-bottom: 0; pointer-events: none; }
.toolbar .combo { align-self: flex-start; margin: 3px 1px 0; }
.combo-s { width: 67px; }
.combo-m { width: 119px; }
.combo-v { width: 78px; }

/* workspace */
.workspace { display: flex; flex: 1; }
.stage { display: flex; flex: 1; flex-direction: column; min-width: 0; }
.viewport { flex: 1; min-height: 0; border: 2px solid #6c6c6c; background: #232323; }
.drawing { width: 100%; height: 100%; }
.wire { fill: none; stroke: #f00; shape-rendering: crispEdges; }
.view-name { fill: #9a9a9a; }
.axis { shape-rendering: crispEdges; }
.axis text { font-size: 10px; }
.slider-row { display: flex; height: 19px; flex: none; margin-right: 2px; background: #505050; }
.step { width: 16px; border: 1px solid #1c1c1c; background: #393939; line-height: 16px; }
.handle { width: 125px; border: 1px solid #505050; border-right: 2px solid #111; border-bottom: 2px solid #111; background: #363636; font-size: 12px; line-height: 16px; }
.trackbar { display: flex; height: 27px; flex: none; padding-right: 50px; border-top: 2px solid #1e1e1e; }
.mini-curve { width: 49px; padding: 3px 0 0 13px; display: flex; align-items: flex-start; }
.ruler { display: flex; flex: 1; border-bottom: 1px solid #484848; }
.tick { display: flex; flex: 1 1 0; flex-direction: column; align-items: center; min-width: 0; height: 24px; color: #b0b0b0; font-size: 12px; line-height: 12px; }
.tick i { flex: none; width: 1px; height: 11px; background: #6e6e6e; }
.tick-major i { height: 12px; }
.tick-now { background: #8a8420; color: #e6dc7a; }
.tick-now i { background: #c8c050; }

/* command panel */
.panel { width: 184px; padding: 2px 6px 4px 4px; border-bottom: 1px solid #1e1e1e; display: flex; flex-direction: column; }
.tabs { display: flex; margin-left: -2px; }
.tab { width: 29px; height: 24px; border-right: 1px solid #1e1e1e; border-bottom: 1px solid #4c4c4c; border-top: 1px solid #4c4c4c; }
.tab svg { width: 28px; height: 24px; }
.tab-on { border-bottom-color: transparent; border-left: 1px solid #4c4c4c; }
.cats { display: flex; gap: 2px; margin: 11px 0 6px 6px; }
.cat { flex: none; width: 22px; height: 22px; }
.cat svg { width: 22px; height: 22px; }
.cat-on { border: 1px solid #161616; background: #27618a; }
.cat-on svg { margin: -1px; }
.combo-p { width: 142px; margin-left: 17px; }
.rollouts { flex: 1; margin-top: 6px; padding: 13px 5px 0 3px; border: 1px solid #4a4a4a; border-top-color: #1c1c1c; border-left-color: #1c1c1c; }
.rollout { padding: 0 2px; border: 1px solid #222; box-shadow: inset 0 0 0 1px #444; margin-bottom: 15px; }
.rollout-head { display: flex; width: 100%; height: 17px; margin-top: -9px; padding: 0 6px; border: 1px solid #6a6a6a; background: #2b2b2b; line-height: 15px; }
.rollout-head b { flex: 1; font-weight: 400; }
.autogrid { display: flex; align-items: center; justify-content: center; gap: 10px; height: 17px; color: #1f1f1f; padding-left: 10px; }
.autogrid input { appearance: none; width: 13px; height: 13px; border: 1px solid #1c1c1c; border-right-color: #4c4c4c; border-bottom-color: #4c4c4c; }
.types { display: grid; grid-template-columns: 1fr 1fr; gap: 3px 10px; padding: 2px 6px 3px; }
.types button { height: 18px; border: 1px solid #4a4a4a; border-right-color: #1a1a1a; border-bottom-color: #1a1a1a; line-height: 16px; }
.name-row { display: flex; gap: 3px; padding: 6px 3px 8px 5px; }
.name-row input { flex: 1; min-width: 0; height: 20px; border: 2px solid #111; border-right-color: #444; border-bottom-color: #444; background: #34475a; }
.swatch { width: 17px; height: 20px; border: 1px solid #4a4a4a; background: #200000; }

/* status area */
.status { display: flex; flex: none; height: 50px; padding-top: 3px; overflow: hidden; }
.listener { display: flex; flex-direction: column; gap: 1px; width: 105px; padding: 0 6px 0 1px; border-right: 2px solid #222; }
.listener input { height: 22px; width: 98px; border: 1px solid #888; border-right: 2px solid #eee; border-bottom: 2px solid #eee; background: #fff; }
.listener .macro { background: #dbc3c6; }
.prompt { display: flex; flex: 1; flex-direction: column; gap: 4px; padding: 1px 2px 0 2px; }
.prompt-row { display: flex; align-items: center; }
.field { height: 21px; padding: 0 5px; border: 1px solid #202020; border-right-color: #4a4a4a; border-bottom-color: #4a4a4a; line-height: 20px; white-space: nowrap; }
.selected { flex: 1; margin-right: 5px; }
.prompt-row .plain { width: 28px; margin-left: -3px; }
.prompt-row label { padding: 0 1px 0 3px; width: 14px; }
.prompt-row input { width: 57px; height: 21px; padding: 0 2px; margin-right: 11px; border: 2px solid #111; border-right-color: #444; border-bottom-color: #444; background: #34475a; color: #1a222a; }
.gridinfo { display: flex; flex-direction: column; gap: 4px; width: 99px; padding-top: 1px; }
.key { display: flex; align-items: center; justify-content: center; width: 42px; height: 43px; margin: 1px 5px 0 3px; border: 1px solid #484848; border-right-color: #1a1a1a; border-bottom-color: #1a1a1a; }
.keys { display: flex; flex-direction: column; gap: 1px; width: 46px; margin-right: 4px; padding-top: 1px; }
.keys button, .filters button { height: 21px; border: 1px solid #484848; border-right-color: #1a1a1a; border-bottom-color: #1a1a1a; line-height: 19px; white-space: nowrap; }
.filters { display: flex; flex-direction: column; gap: 1px; width: 116px; padding-top: 1px; }
.playback { width: 129px; padding: 0 0 0 5px; }
.play-row { display: flex; align-items: center; height: 22px; }
.play-row .plain { width: 22px; height: 20px; }
.play-row .sep { margin: 0 1px; }
.play-row .frame { width: 64px; height: 20px; margin-left: 4px; padding: 0 3px; border: 2px solid #111; border-right-color: #444; border-bottom-color: #444; background: #34475a; font-size: 12px; }
.play-row .spin { width: 12px; }
.nav { display: grid; grid-template-columns: repeat(4, 23px); grid-auto-rows: 22px; padding: 0 5px 0 1px; border-left: 1px solid #222; }
.nav svg { width: 20px; height: 20px; }

/* taskbar */
.taskbar { display: flex; align-items: center; gap: 5px; height: 40px; flex: none; padding-left: 7px; border-top: 1px solid #7c8794; background: linear-gradient(to right, #0b1018 0, #0b1018 370px, #a9c1dc 400px, #a4c2e2 800px, #a4c4e8 967px, #0b0f16 977px, #05070a 100%); }
.start { width: 40px; margin-right: 9px; }
.start svg { width: 38px; height: 38px; }
.task { display: flex; align-items: center; justify-content: center; flex: none; width: 57px; height: 38px; border: 1px solid #7d838a; border-radius: 3px; background: linear-gradient(135deg, #8f9398, #43474d 40%, #2a2d33 70%, #4b4f55); }
.task svg { width: 32px; height: 32px; }
.task-stack { width: 53px; margin-right: 4px; box-shadow: 3px 0 0 -1px #22252a, 4px 0 0 -1px #7d838a; }
.task-flat { border-color: transparent; background: none; }
.task-light { border-color: #5d6f84; background: linear-gradient(135deg, #e3ebf4, #b4c9e0 50%, #a9c3e0); box-shadow: inset 0 0 0 1px rgba(255,255,255,.5); }
.task-edge { background: linear-gradient(to right, #8f9398 0, #30343a 30%, #9fb6d0 70%, #b4c9e0); }
.task-on { background: linear-gradient(135deg, #fff, #dbe7f3 50%, #c8dcf0); }
.calc-digit { font: bold 8px "Liberation Mono", monospace; fill: #234; }
.ps-text { font: bold 15px "Open Sans", sans-serif; fill: #3fc0ff; }
.yahoo-y { font: bold 15px "Liberation Serif", serif; fill: #fff; }
.tray { display: flex; align-items: center; height: 100%; margin-left: auto; color: #fff; }
.tray .plain { width: 24px; height: 24px; }
.clock { display: flex; flex-direction: column; align-items: center; width: 74px; font: 11px/16px "Noto Sans", "Open Sans", sans-serif; }
.show-desktop { width: 14px; height: 100%; border: 1px solid #5c6268; background: linear-gradient(#777, #222 50%, #111); }
```
FILE: script.js
```
// frame ruler, one tick per frame with a number every fifth
const ruler = document.getElementById('ruler');
for (let f = 0; f <= 100; f++) {
    const tick = document.createElement('span');
    tick.className = 'tick' + (f % 5 ? '' : ' tick-major') + (f ? '' : ' tick-now');
    tick.appendChild(document.createElement('i'));
    if (f % 5 === 0) {
        tick.append(String(f));
    }
    ruler.appendChild(tick);
}
```
